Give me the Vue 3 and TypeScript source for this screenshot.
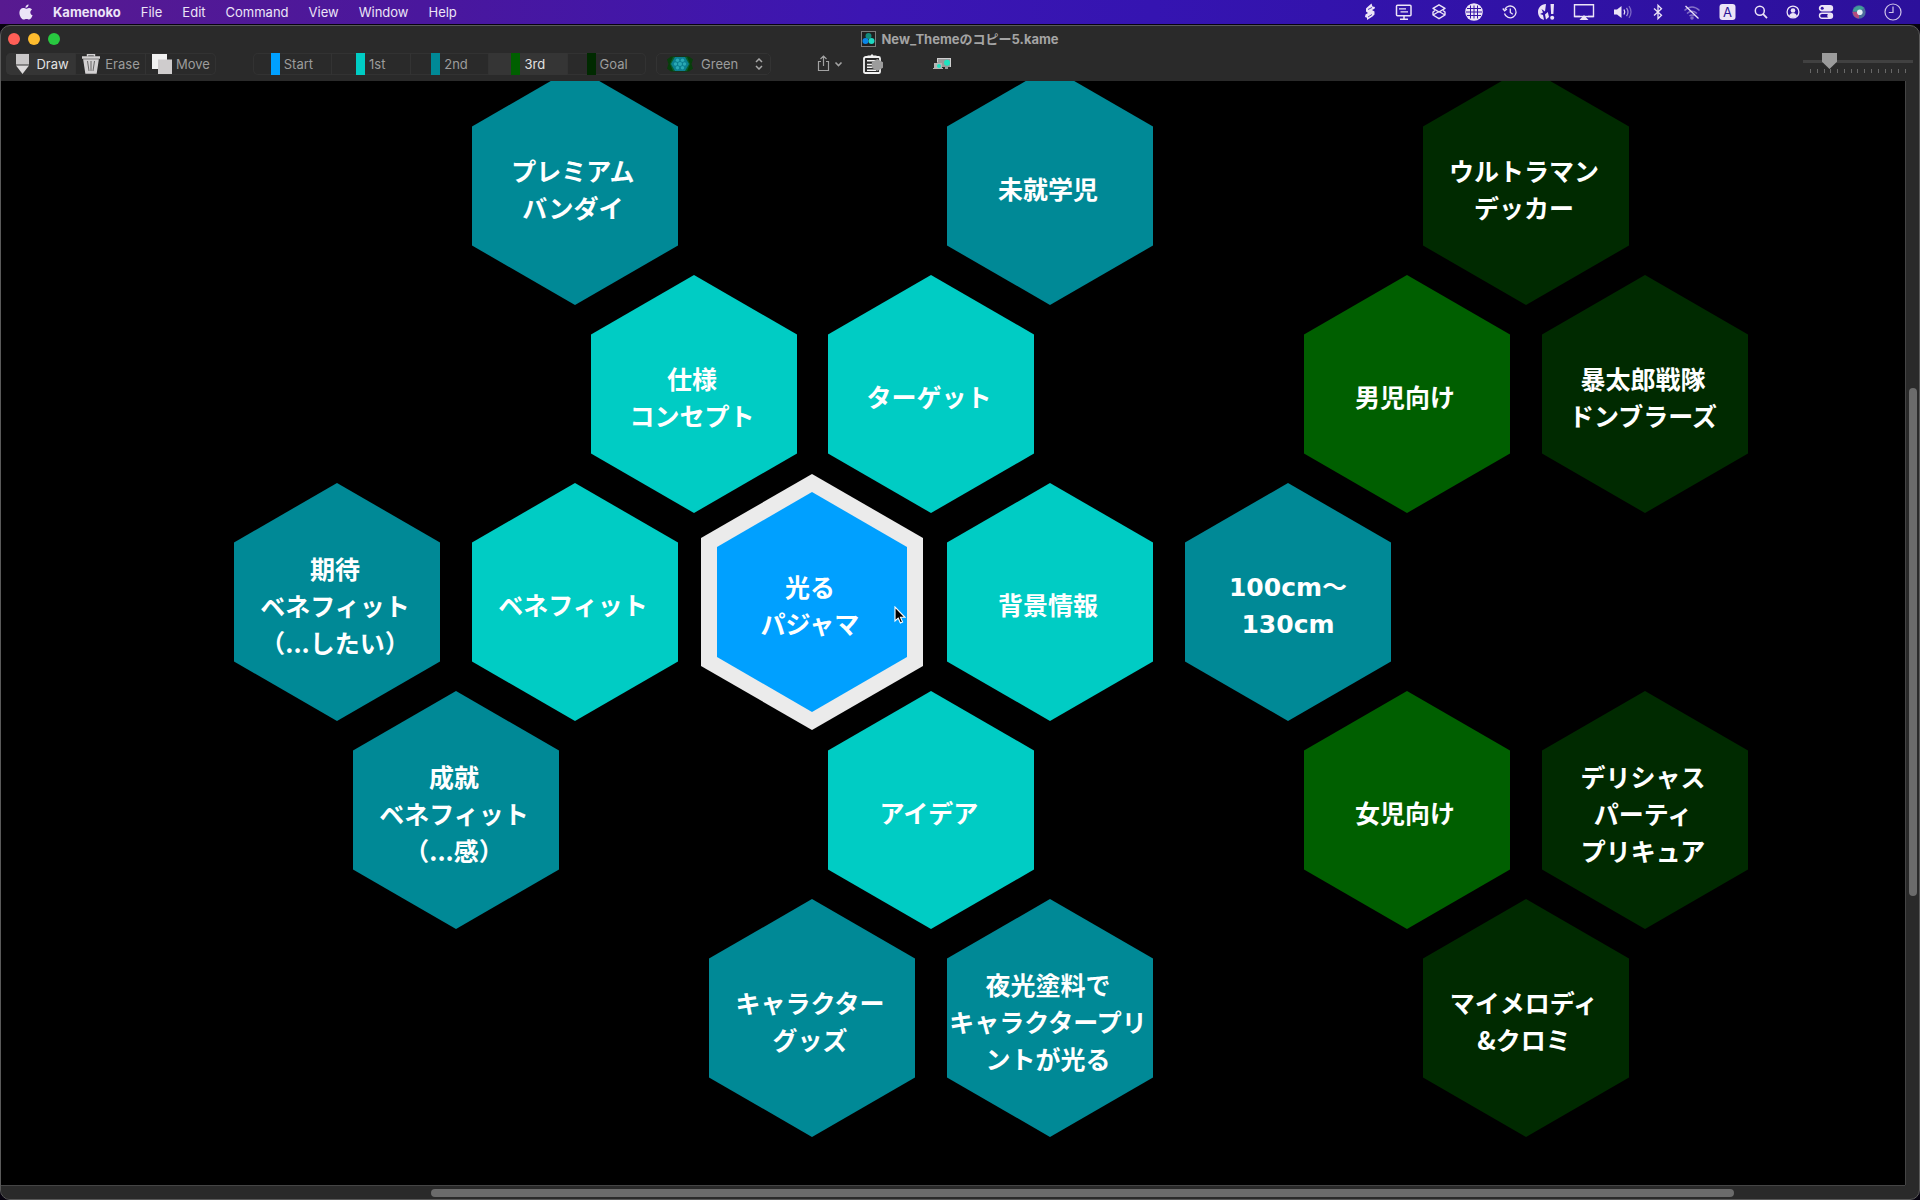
<script setup lang="ts">
import { ref } from 'vue'

type Level = 'start' | 'first' | 'second' | 'third' | 'goal'

interface HexNode {
  x: number
  y: number
  level: Level
  lines: string[]
  latin?: boolean
}

const menus = ['File', 'Edit', 'Command', 'View', 'Window', 'Help']

const levels: { id: Level; label: string }[] = [
  { id: 'start', label: 'Start' },
  { id: 'first', label: '1st' },
  { id: 'second', label: '2nd' },
  { id: 'third', label: '3rd' },
  { id: 'goal', label: 'Goal' },
]

const tool = ref('Draw')
const level = ref<Level>('third')
const theme = ref('Green')
const zoom = ref(20)

// Node centres, measured from the top-left corner of the canvas.
const nodes: HexNode[] = [
  { x: 574, y: 105, level: 'second', lines: ['プレミアム', 'バンダイ'] },
  { x: 1049, y: 105, level: 'second', lines: ['未就学児'] },
  { x: 1525, y: 105, level: 'goal', lines: ['ウルトラマン', 'デッカー'] },
  { x: 693, y: 313, level: 'first', lines: ['仕様', 'コンセプト'] },
  { x: 930, y: 313, level: 'first', lines: ['ターゲット'] },
  { x: 1406, y: 313, level: 'third', lines: ['男児向け'] },
  { x: 1644, y: 313, level: 'goal', lines: ['暴太郎戦隊', 'ドンブラーズ'] },
  { x: 336, y: 521, level: 'second', lines: ['期待', 'ベネフィット', '（...したい）'] },
  { x: 574, y: 521, level: 'first', lines: ['ベネフィット'] },
  { x: 811, y: 521, level: 'start', lines: ['光る', 'パジャマ'] },
  { x: 1049, y: 521, level: 'first', lines: ['背景情報'] },
  { x: 1287, y: 521, level: 'second', lines: ['100cm〜', '130cm'], latin: true },
  { x: 455, y: 729, level: 'second', lines: ['成就', 'ベネフィット', '（...感）'] },
  { x: 930, y: 729, level: 'first', lines: ['アイデア'] },
  { x: 1406, y: 729, level: 'third', lines: ['女児向け'] },
  { x: 1644, y: 729, level: 'goal', lines: ['デリシャス', 'パーティ', 'プリキュア'] },
  { x: 811, y: 937, level: 'second', lines: ['キャラクター', 'グッズ'] },
  { x: 1049, y: 937, level: 'second', lines: ['夜光塗料で', 'キャラクタープリ', 'ントが光る'] },
  { x: 1525, y: 937, level: 'goal', lines: ['マイメロディ', '&クロミ'] },
]

const ticks = 15
const vScroll = { top: '27.8%', height: '46%' }
const hScroll = { left: '22.6%', width: '68.4%' }
</script>

<template>
  <div class="desktop">
    <header class="menubar">
      <nav class="menus">
        <button class="apple" aria-label="Apple">
          <svg width="14" height="17" viewBox="0 0 14 17" fill="currentColor">
            <path d="M9.600.4c.1 1.800-1.400 3.400-3.100 3.300C6.300 2.100 7.900.5 9.600.4zM7.200 4.700c.7 0 1.600-.9 3-.8 1.300.1 2.200.6 2.800 1.500-2.500 1.600-2 4.900.6 5.900-.5 1.500-1.900 4.100-3.400 4.200-1 0-1.400-.6-2.700-.6s-1.700.6-2.700.6C2.700 15.500.4 12 .4 8.700c0-3.100 1.900-4.700 3.800-4.700 1.300 0 2.200.7 3 .7z" />
          </svg>
        </button>
        <button class="app-name">Kamenoko</button>
        <button v-for="m in menus" :key="m">{{ m }}</button>
      </nav>
      <div class="status">
        <svg width="14" height="18" viewBox="0 0 14 18" fill="currentColor"><path d="M8.500.5 4.500 4 3 5.500v3L5 10l-2.500 1.500L2 14l2 .8V17l5.500-3.500 2-2v-3L9 7l2.500-1.200L12 4l-2.500-.5z" /><path d="m5 6.500 4-2M5 14l4-2.500" stroke="#3412a6" stroke-width=".8" /></svg>
        <svg width="18" height="18" viewBox="0 0 18 18" fill="none" stroke="currentColor" stroke-width="1.5"><rect x="1.500" y="2.300" width="14.500" height="10.500" rx="1" /><path d="M4 5.800h7M5.500 8.800h7.500" stroke-width="1.200" /><path d="M9 13v3M5 16.200h8" /></svg>
        <svg width="16" height="18" viewBox="0 0 16 18" fill="none" stroke="currentColor" stroke-width="1.4" stroke-linejoin="round"><path d="m8 1.800 6 3.500-6 3.700-6-3.700z" /><path d="M4 7.500 2 9v3l6 3.700 6-3.700V9l-2-1.500M2 12l6-3.500 6 3.500" /></svg>
        <svg width="18" height="18" viewBox="0 0 18 18"><circle cx="9" cy="9" r="8.800" fill="currentColor" /><path d="M2 5.500h14M1 9h16M2 12.500h14M5.500 2.500v13M9 2.500v13M12.500 2.500v13" stroke="#3412a6" /></svg>
        <svg width="18" height="16" viewBox="-1 0 18 16" fill="none" stroke="currentColor" stroke-width="1.3"><path d="M2.800 5.500a5.900 5.900 0 1 1-.3 4" /><path d="M8.300 4.500v4l2.500 1.800" /><path d="m.8 4.500 1.800 2.300L5 5" /></svg>
        <svg width="18" height="18" viewBox="0 0 18 18" fill="currentColor"><path d="M9 1C4 1 1 5 1 9c0 4.500 3 7.500 6 7.800L6 12l-3-1 3-1.500L4.500 6l3.500 2.500zM8 11.500 10.800 9l1.200 5-3 2.500zM13.500 1H17l-.6 10h-2.300z" /><circle cx="15.200" cy="14.800" r="2" /></svg>
        <svg width="22" height="18" viewBox="0 0 22 18" fill="none" stroke="currentColor" stroke-width="1.4"><path d="M7 13.500H1.500V1.700h19v11.800H15" /><path d="M1.500 13.500h19" /><path d="m11 12 4.500 5h-9z" fill="currentColor" stroke="none" /></svg>
        <svg width="20" height="16" viewBox="0 0 20 16" fill="none" stroke="currentColor" stroke-width="1.3"><path d="M1 5.500h3L8.500 2v12L4 10.500H1z" fill="currentColor" stroke="none" /><path d="M11 5.500q1.500 2.500 0 5" /><path d="M13.500 3.800q3 4.200 0 8.400" opacity=".6" /><path d="M16 2.200q4 5.800 0 11.600" opacity=".4" /></svg>
        <svg width="14" height="18" viewBox="-1 0 14 18" fill="none" stroke="currentColor" stroke-width="1.3"><path d="m2 5.500 7.500 6.800L6 15.700V2.300l3.500 3.400L2 12.500" /></svg>
        <svg width="18" height="16" viewBox="0 0 18 16" fill="none" stroke="currentColor" stroke-width="1.5"><g opacity=".45"><path d="M1.500 6.500q7.500-7 15 0M4 9.500q5-4.500 10 0M6.500 12q2.500-2 5 0" /><circle cx="9" cy="14" r="1" /></g><path d="m2.500 2 13 12.500" stroke-width="1.3" /></svg>
        <svg width="17" height="16" viewBox="0 0 17 16"><rect x=".5" width="16" height="16" rx="3" fill="currentColor" /><text x="8.500" y="12.500" text-anchor="middle" font-size="13" fill="#2d1296">A</text></svg>
        <svg width="14" height="16" viewBox="0 0 14 16" fill="none" stroke="currentColor" stroke-width="1.5"><circle cx="5.800" cy="6.800" r="4.500" /><path d="m9.200 10.200 3.800 4" stroke-width="1.800" /></svg>
        <svg width="14" height="16" viewBox="0 0 14 16"><circle cx="7" cy="8" r="5.900" fill="none" stroke="currentColor" stroke-width="1.3" /><circle cx="7" cy="6.500" r="2.300" fill="currentColor" /><path d="M3 12q1-3 4-3t4 3q-4 3-8 0z" fill="currentColor" /></svg>
        <svg width="16" height="16" viewBox="0 0 16 16" fill="none" stroke="currentColor" stroke-width="1.4"><rect x="1.500" y="1.700" width="13" height="5" rx="2.500" fill="currentColor" /><circle cx="4.200" cy="4.200" r="1.500" fill="#3412a6" stroke="none" /><rect x="1.500" y="9.200" width="13" height="5" rx="2.500" /><circle cx="11.800" cy="11.700" r="1.800" fill="currentColor" /></svg>
        <svg width="14" height="16" viewBox="0 0 14 16"><circle cx="7" cy="8" r="6.700" fill="#4b6d9c" /><path d="M1 7a6.500 6.500 0 0 1 11-3L7 8z" fill="#3f9d98" /><path d="M.5 8Q2 14 7 14.500L7 8z" fill="#b24a7e" /><circle cx="7.800" cy="8.300" r="2.800" fill="#e6eef8" /></svg>
        <svg width="18" height="18" viewBox="0 0 18 18" fill="none" stroke="currentColor" stroke-width="1.2" opacity=".85"><circle cx="9" cy="9" r="8" /><path d="M9 3.500v6H4.800" /></svg>
      </div>
    </header>

    <main class="window">
      <div class="titlebar">
        <div class="lights">
          <button class="light close" aria-label="Close"></button>
          <button class="light minimise" aria-label="Minimise"></button>
          <button class="light full" aria-label="Full screen"></button>
        </div>
        <h1 class="title">
          <svg width="15" height="16" viewBox="0 0 15 16"><rect x=".5" y=".5" width="14" height="15" fill="#202020" stroke="#7b7b7b" /><circle cx="7.500" cy="5" r="3" fill="#128a7c" /><circle cx="4.500" cy="10" r="3" fill="#0a86e8" /><circle cx="10.500" cy="10" r="3" fill="#1fd8c2" /></svg>
          <span>New_Themeのコピー5.kame</span>
        </h1>
      </div>

      <div class="toolbar">
        <div class="segments tools" role="group" aria-label="Tool">
          <button :class="{ on: tool === 'Draw' }" @click="tool = 'Draw'">
            <svg width="20" height="20" viewBox="0 0 20 20"><path d="M4 0h13v10.500H4z" fill="#c9c7c8" /><path d="M4 11.500h13L10.500 20z" fill="#dcdadb" /></svg>
            Draw
          </button>
          <button :class="{ on: tool === 'Erase' }" @click="tool = 'Erase'">
            <svg width="20" height="20" viewBox="0 0 20 20" fill="none" stroke="#d2d0d1"><path d="M6.500 2.500V.7h7v1.800" stroke-width="1.4" /><path d="M1 3.500h18" stroke-width="2.4" /><path d="M3 6h14l-2 13H5z" fill="#d2d0d1" stroke-width="1.5" /><path d="M6.500 7 8 17M10 7v10M13.500 7 12 17" stroke="#4a4a4a" stroke-width=".8" /></svg>
            Erase
          </button>
          <button :class="{ on: tool === 'Move' }" @click="tool = 'Move'">
            <svg width="20" height="20" viewBox="0 0 20 20"><path d="M0 0h15v6H7v9H0z" fill="#f1f1f1" /><path d="M6 5.500h14V20H6z" fill="#cfcccd" /></svg>
            Move
          </button>
        </div>

        <div class="segments levels" role="group" aria-label="Level">
          <button v-for="l in levels" :key="l.id" :class="{ on: level === l.id }" @click="level = l.id">
            <i class="swatch" :class="l.id"></i>{{ l.label }}
          </button>
        </div>

        <label class="theme">
          <svg width="28" height="18" viewBox="0 0 28 18"><path d="M5 1.500h18l4 3-1.500 4.500L27 13.500l-4 3H5l-4-3L2.500 9 1 4.500z" fill="#073f0b" /><path d="M7 2h14l3 7-3 7H7L4 9z" fill="#08602e" /><path d="M9 2h10l4 7-4 7H9L5 9z" fill="#0b7f91" /><g fill="#2aa9b4"><circle cx="14" cy="9" r="2" /><circle cx="9.500" cy="9" r="1.700" /><circle cx="18.500" cy="9" r="1.700" /><circle cx="11.500" cy="5.300" r="1.700" /><circle cx="16.500" cy="5.300" r="1.700" /><circle cx="11.500" cy="12.700" r="1.700" /><circle cx="16.500" cy="12.700" r="1.700" /></g></svg>
          <select v-model="theme" aria-label="Theme">
            <option>Green</option>
          </select>
          <svg width="8" height="12" viewBox="0 0 8 12" fill="none" stroke="#a8a8a8" stroke-width="1.5"><path d="m1 4 3-3 3 3M1 8l3 3 3-3" /></svg>
        </label>

        <div class="actions">
          <button aria-label="Share">
            <svg width="26" height="18" viewBox="0 0 26 18" fill="none" stroke="#a2a2a2" stroke-width="1.2"><path d="M4 6.500H1.500v9h10v-9H9M6.500 11V1.200M3.500 4l3-3 3 3" /><path d="m18.500 7.500 3 3 3-3" stroke-width="1.6" /></svg>
          </button>
          <button class="clip" aria-label="Copy outline">
            <svg width="20" height="20" viewBox="0 0 20 20" fill="none"><path d="M3 3h12.500q1.500 0 1.500 1.500V18q0 1-1.500 1H2.500Q1 19 1 18V4.500Q1 3 3 3z" stroke="#f2f2f2" stroke-width="1.8" /><path d="M4.500 1.500h3L9 0l1.500 1.500h3V4h-9z" fill="#f2f2f2" /><path d="M4 6.800h9M4 10.500h6M4 13.300h6M4 16.300h9" stroke="#f2f2f2" stroke-width="1.5" /><path d="m14.300 5 5.700 3.200v5.600L14.300 17l-5.500-3.200V8.200z" fill="#9c9c9c" /></svg>
          </button>
          <button class="screens" aria-label="Screens">
            <svg width="18" height="12" viewBox="0 0 18 12"><path d="M4 0h14v9h-3v2h-3V9H4z" fill="#9a9a9a" /><path d="M4.500 0v4M17.500 0v9M4 .5h14" stroke="#d0d0d0" /><circle cx="14" cy="4.800" r="3" fill="#1fe3c0" /><path d="M1 5h8v5h1v1H0v-1h1z" fill="#b5b5b5" /><circle cx="6" cy="8" r="2" fill="#1fe3c0" /></svg>
          </button>
        </div>

        <div class="zoom">
          <input v-model="zoom" type="range" min="0" max="100" aria-label="Zoom" />
          <div class="ticks"><i v-for="t in ticks" :key="t"></i></div>
        </div>
      </div>

      <div class="workspace">
        <section class="canvas">
          <div
            v-for="n in nodes"
            :key="n.lines[0] + n.y"
            class="node"
            :class="[n.level, { latin: n.latin, single: n.lines.length === 1 }]"
            :style="{ left: n.x + 'px', top: n.y + 'px' }"
          >
            <div class="hex"></div>
            <p><span v-for="line in n.lines" :key="line">{{ line }}</span></p>
          </div>
          <svg class="cursor" width="12" height="18" viewBox="0 0 12 18"><path d="M1 1v14l3.200-2.800 2.200 4.800 2.200-1-2.100-4.700H11z" fill="#000" stroke="#fff" stroke-width="1.1" /></svg>
        </section>
        <div class="track vertical"><div class="thumb" :style="vScroll"></div></div>
        <div class="track horizontal"><div class="thumb" :style="hScroll"></div></div>
      </div>
    </main>
  </div>
</template>

<style>
html,
body {
  margin: 0;
  background: #07030f;
}
</style>

<style scoped>
.desktop {
  display: flex;
  flex-direction: column;
  min-height: 100vh;
  overflow: hidden;
  font-family: Inter, "Noto Sans CJK JP", sans-serif;
  font-size: 13px;
  line-height: 16px;
}

button {
  margin: 0;
  padding: 0;
  border: 0;
  background: none;
  color: inherit;
  font: inherit;
}

svg {
  display: block;
  flex: none;
}

.menubar {
  display: flex;
  align-items: center;
  justify-content: space-between;
  height: 24px;
  padding: 0 18px 0 19px;
  background: linear-gradient(90deg, #581a90 0%, #4a179d 22%, #3c16b2 45%, #3514b1 60%, #2c109b 100%);
  color: #ece4f7;
}

.menus {
  display: flex;
  align-items: center;
  gap: 20px;
}

.app-name {
  font-weight: 700;
}

.status {
  display: flex;
  align-items: center;
  gap: 18px;
}

.window {
  display: flex;
  flex: 1;
  flex-direction: column;
  margin-top: 1px;
  border: 1px solid #5a5a5a;
  border-radius: 10px;
  overflow: hidden;
  background: #2a2a2a;
}

.titlebar {
  display: grid;
  grid-template-columns: 1fr auto 1fr;
  align-items: center;
  height: 26px;
  padding: 0 7px;
}

.lights {
  display: flex;
  gap: 8px;
}

.light {
  width: 12px;
  height: 12px;
  border-radius: 50%;
}

.close {
  background: #ff5f57;
}

.minimise {
  background: #febc2e;
}

.full {
  background: #28c840;
}

.title {
  display: flex;
  align-items: center;
  gap: 5px;
  margin: 0;
  color: #a4a4a4;
  font-size: 13px;
  font-weight: 700;
}

.toolbar {
  display: flex;
  align-items: flex-start;
  height: 28px;
  padding: 1px 6px 0 5px;
  color: #9c9c9c;
}

.segments {
  display: flex;
  height: 22px;
  box-sizing: border-box;
  border-radius: 5px;
  box-shadow: inset 0 0 0 1px #323232;
}

.segments button {
  display: flex;
  align-items: center;
  justify-content: center;
  box-sizing: border-box;
  border-right: 1px solid #333333;
}

.segments button:last-child {
  border-right: 0;
}

.segments .on {
  background: #353535;
  color: #e2e2e2;
}

.tools button {
  width: 70px;
  gap: 4px;
}

.tools .on {
  border-radius: 5px 0 0 5px;
}

.levels {
  flex: none;
  width: 393px;
  margin-left: 37px;
}

.levels button {
  flex: 1;
  gap: 4px;
}

.swatch {
  width: 9px;
  height: 22px;
}

.swatch.start,
.start .hex::after {
  background: #00a0ff;
}

.swatch.first,
.first .hex {
  background: #00ccc4;
}

.swatch.second,
.second .hex {
  background: #008996;
}

.swatch.third,
.third .hex {
  background: #005f00;
}

.swatch.goal,
.goal .hex {
  background: #002a00;
}

.theme {
  display: flex;
  align-items: center;
  width: 115px;
  height: 22px;
  box-sizing: border-box;
  margin-left: 10px;
  padding: 0 7px 0 9px;
  border: 1px solid #333333;
  border-radius: 5px;
}

.theme select {
  flex: 1;
  min-width: 0;
  margin: 0;
  padding: 0 0 0 7px;
  appearance: none;
  border: 0;
  background: none;
  color: inherit;
  font: inherit;
}

.actions {
  display: flex;
  align-items: center;
  height: 22px;
  margin-left: 46px;
}

.clip {
  margin-left: 20px;
}

.screens {
  margin-left: 50px;
}

.zoom {
  width: 110px;
  margin-left: auto;
}

.zoom input {
  display: block;
  width: 100%;
  height: 16px;
  margin: 0;
  appearance: none;
  background: linear-gradient(#414141, #414141) center / 100% 3px no-repeat;
}

.zoom input::-webkit-slider-thumb {
  appearance: none;
  width: 15px;
  height: 16px;
  background: #9b9b9b;
  clip-path: polygon(0 0, 100% 0, 100% 55%, 50% 100%, 0 55%);
}

.ticks {
  display: flex;
  justify-content: space-between;
  padding: 0 7px;
}

.ticks i {
  width: 1px;
  height: 4px;
  background: #686868;
}

.workspace {
  display: grid;
  flex: 1;
  grid-template: 1fr 14px / 1fr 14px;
}

.canvas {
  position: relative;
  min-height: 600px;
  overflow: hidden;
  background: #000;
}

.node {
  position: absolute;
  display: grid;
  place-items: center;
  width: 206px;
  height: 238px;
  transform: translate(-50%, -50%);
}

.hex {
  grid-area: 1 / 1;
  width: 100%;
  height: 100%;
  clip-path: polygon(50% 0, 100% 25%, 100% 75%, 50% 100%, 0 75%, 0 25%);
}

.node.start {
  width: 222px;
  height: 256px;
}

.start .hex {
  display: grid;
  place-items: center;
  background: #ebebeb;
}

.start .hex::after {
  content: "";
  width: 190px;
  height: 220px;
  clip-path: polygon(50% 0, 100% 25%, 100% 75%, 50% 100%, 0 75%, 0 25%);
}

.node p {
  z-index: 1;
  grid-area: 1 / 1;
  display: flex;
  flex-direction: column;
  align-items: center;
  margin: 0;
  padding: 6px 4px 0 0;
  color: #fff;
  font-family: "Noto Sans CJK JP", sans-serif;
  font-size: 25px;
  font-weight: 700;
  line-height: 37px;
  white-space: nowrap;
}

.node.single p {
  padding-top: 4px;
}

.node.latin p {
  padding: 8px 0 0;
  font-family: "DejaVu Sans", "Noto Sans CJK JP", sans-serif;
}

.cursor {
  position: absolute;
  left: 893px;
  top: 525px;
}

.track {
  position: relative;
  box-sizing: border-box;
  background: #2a2a2a;
}

.vertical {
  border-left: 1px solid #454545;
}

.horizontal {
  border-top: 1px solid #454545;
}

.thumb {
  position: absolute;
  border-radius: 4px;
  background: #6b6b6b;
}

.vertical .thumb {
  left: 3px;
  width: 8px;
}

.horizontal .thumb {
  top: 3px;
  height: 8px;
}
</style>
